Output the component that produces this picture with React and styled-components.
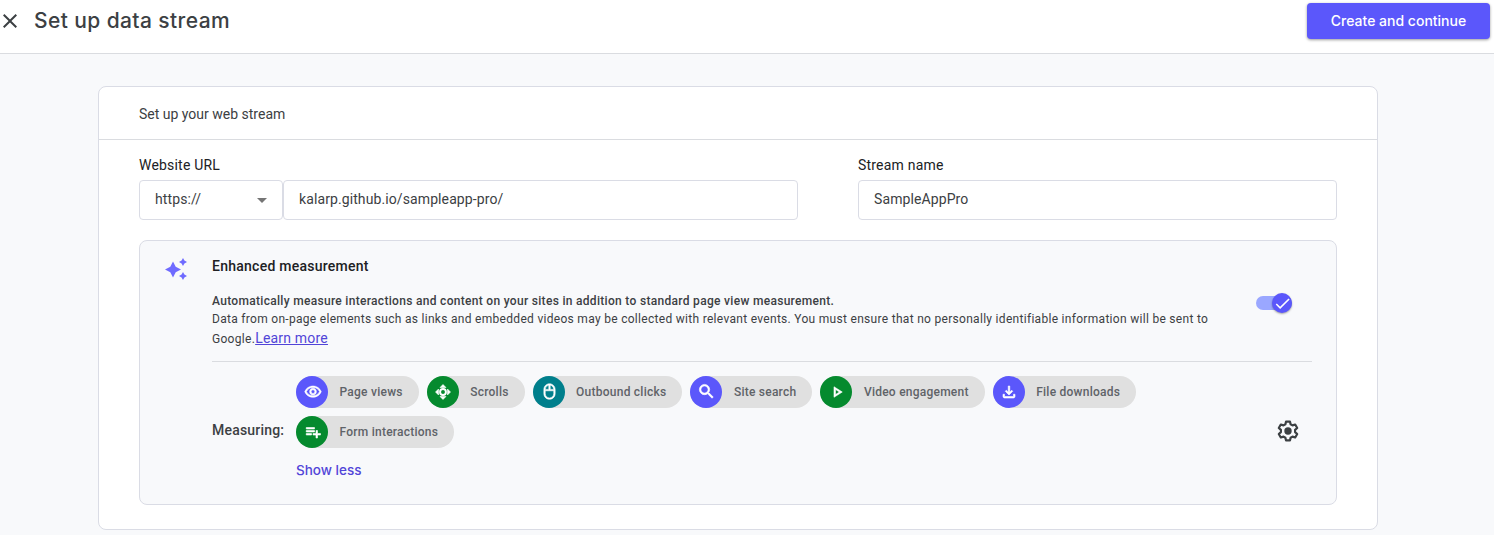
import React from "react";
import styled, { createGlobalStyle } from "styled-components";
import {
  MdClose, MdArrowDropDown, MdOutlineVisibility, MdOutlineMouse, MdSearch,
  MdOutlinePlayArrow, MdOutlineFileDownload, MdPlaylistAdd, MdCheck,
} from "react-icons/md";

const GlobalStyle = createGlobalStyle`
  * { box-sizing: border-box; }
  body {
    margin: 0;
    background: #f8f9fb;
    color: #3c4043;
    font-family: Roboto, "Liberation Sans", sans-serif;
    font-size: 14px;
    overflow: hidden;
  }
`;

const Header = styled.header`
  height: 54px;
  padding: 0 4px 12px 0;
  display: flex;
  align-items: center;
  justify-content: space-between;
  background: #fff;
  border-bottom: 1px solid #dadce0;
`;
const HeaderTitle = styled.div`
  display: flex;
  align-items: center;
  color: #3c4043;
  svg { margin-left: -2px; flex: none; }
`;
const Title = styled.h1`
  margin: 0 0 0 12px;
  font: 500 21px/28px Inter, sans-serif;
  letter-spacing: 0.4px;
  color: #3c4043;
`;
const PrimaryButton = styled.button`
  width: 183px;
  height: 36px;
  border: 0;
  border-radius: 4px;
  background: #5b57fb;
  color: #fff;
  font: 500 14px/20px Inter, sans-serif;
  letter-spacing: 0;
  box-shadow: 0 1px 3px rgba(0, 0, 0, 0.4);
`;

const Card = styled.main`
  width: 1280px;
  height: 444px;
  margin: 32px 0 0 98px;
  background: #fff;
  border: 1px solid #dadce5;
  border-radius: 8px;
`;
const CardHeader = styled.div`
  height: 53px;
  padding: 2px 40px 0;
  display: flex;
  align-items: center;
  border-bottom: 1px solid #dadce0;
  letter-spacing: 0;
`;
const CardBody = styled.div`
  padding: 15px 40px 0;
`;
const Fields = styled.div`
  display: grid;
  grid-template-columns: 659px 479px;
  gap: 60px;
`;
const Field = styled.div``;
const Label = styled.div`
  height: 25px;
  line-height: 20px;
  letter-spacing: 0.2px;
  color: #202124;
`;
const Controls = styled.div`
  display: flex;
`;
const Box = styled.div`
  height: 40px;
  flex: ${(p) => (p.$width ? `0 0 ${p.$width}px` : "1")};
  padding: 0 8px 2px 15px;
  display: flex;
  align-items: center;
  justify-content: space-between;
  border: 1px solid #dadce5;
  border-radius: 4px;
  letter-spacing: 0.1px;
  color: #3c4043;
  svg { color: #757575; margin-top: 2px; }
`;

const Panel = styled.section`
  height: 265px;
  margin-top: 20px;
  padding: 15px 24px 0;
  display: grid;
  grid-template-columns: 24px 1fr;
  column-gap: 24px;
  background: #f8f9fb;
  border: 1px solid #dadce5;
  border-radius: 8px;
`;
const SparkSlot = styled.div`
  padding-top: 1px;
`;
const PanelTitle = styled.h2`
  margin: 0;
  font: 500 14px/20px Roboto, sans-serif;
  letter-spacing: 0.25px;
  color: #202124;
`;
const Summary = styled.div`
  height: 70px;
  margin-top: 15px;
  display: flex;
  justify-content: space-between;
`;
const Description = styled.div`
  width: 1010px;
  padding-top: 1px;
  font-size: 12px;
  line-height: 18px;
  letter-spacing: 0.298px;
`;
const Strong = styled.div`
  font-weight: 500;
  letter-spacing: 0.305px;
`;
const Link = styled.a`
  font-size: 14px;
  line-height: 20px;
  letter-spacing: 0.2px;
  color: #5145d8;
  text-decoration: underline;
`;
const Toggle = styled.div`
  width: 36px;
  height: 14px;
  margin: 5px 20px 0 0;
  display: flex;
  align-items: center;
  justify-content: flex-end;
  border-radius: 7px;
  background: #9aa7ff;
`;
const Knob = styled.div`
  width: 20px;
  height: 20px;
  flex: none;
  display: grid;
  place-items: center;
  border-radius: 50%;
  background: #5b57fb;
  color: #fff;
  box-shadow: 0 1px 2px rgba(0, 0, 0, 0.35);
`;
const Measuring = styled.div`
  display: flex;
  align-items: center;
  width: 1100px;
  height: 138px;
  border-top: 1px solid #dadce0;
`;
const MeasuringLabel = styled.div`
  width: 84px;
  padding-bottom: 2px;
  font-weight: 500;
  letter-spacing: 0.2px;
`;
const ChipArea = styled.div`
  width: 900px;
  height: 110px;
`;
const Chips = styled.div`
  display: flex;
  flex-wrap: wrap;
  gap: 8px;
`;
const Chip = styled.div`
  height: 32px;
  padding-right: 16px;
  display: flex;
  align-items: center;
  border-radius: 16px;
  background: #e0e0e0;
  color: #5f6368;
  font-size: 12px;
  font-weight: 500;
  letter-spacing: 0.24px;
`;
const ChipIcon = styled.span`
  width: 32px;
  height: 32px;
  margin-right: 11.5px;
  padding-left: 1px;
  display: grid;
  place-items: center;
  border-radius: 50%;
  background: ${(p) => p.$color};
  color: #fff;
  path:not([fill="none"]) { stroke: currentColor; stroke-width: 0.8px; }
`;
const ShowLess = styled.div`
  margin-top: 12px;
  font: 500 13.5px/20px Inter, sans-serif;
  letter-spacing: 0;
  color: #5145d8;
`;
const Settings = styled.svg`
  margin: 0 13px 0 auto;
`;

const SparkIcon = () => (
  <svg width="24" height="24" viewBox="0 0 24 24" fill="#6f6bff">
    <path d="M9 4.500l2.700 5.300L17 12.500l-5.300 2.700L9 20.500l-2.700-5.300L1 12.500l5.300-2.700zM19 1l1.400 2.600L23 5l-2.600 1.400L19 9l-1.400-2.600L15 5l2.600-1.400zM19 15l1.400 2.600L23 19l-2.600 1.400L19 23l-1.400-2.600L15 19l2.600-1.400z" />
  </svg>
);

const ScrollIcon = () => (
  <svg width="18" height="18" viewBox="0 0 24 24" fill="currentColor">
    <path d="M12 2 8 6h8zM12 22l4-4H8zM2 12l4 4V8zM22 12l-4-4v8z" />
    <circle cx="12" cy="12" r="3.900" fill="none" stroke="currentColor" strokeWidth="2.600" />
  </svg>
);

const BLUE = "#5b57fb";
const GREEN = "#058a2e";
const TEAL = "#007f8c";

const chips = [
  { label: "Page views", color: BLUE, icon: <MdOutlineVisibility size={18} /> },
  { label: "Scrolls", color: GREEN, icon: <ScrollIcon /> },
  { label: "Outbound clicks", color: TEAL, icon: <MdOutlineMouse size={17} /> },
  { label: "Site search", color: BLUE, icon: <MdSearch size={19} /> },
  { label: "Video engagement", color: GREEN, icon: <MdOutlinePlayArrow size={18} /> },
  { label: "File downloads", color: BLUE, icon: <MdOutlineFileDownload size={18} /> },
  { label: "Form interactions", color: GREEN, icon: <MdPlaylistAdd size={18} /> },
];

export default function App() {
  return (
    <>
      <GlobalStyle />
      <Header>
        <HeaderTitle>
          <MdClose size={24} />
          <Title>Set up data stream</Title>
        </HeaderTitle>
        <PrimaryButton>Create and continue</PrimaryButton>
      </Header>
      <Card>
        <CardHeader>Set up your web stream</CardHeader>
        <CardBody>
          <Fields>
            <Field>
              <Label>Website URL</Label>
              <Controls>
                <Box $width={144}>https://<MdArrowDropDown size={24} /></Box>
                <Box>kalarp.github.io/sampleapp-pro/</Box>
              </Controls>
            </Field>
            <Field>
              <Label>Stream name</Label>
              <Controls><Box>SampleAppPro</Box></Controls>
            </Field>
          </Fields>
          <Panel>
            <SparkSlot><SparkIcon /></SparkSlot>
            <div>
              <PanelTitle>Enhanced measurement</PanelTitle>
              <Summary>
                <Description>
                  <Strong>Automatically measure interactions and content on your sites in addition to standard page view measurement.</Strong>
                  Data from on-page elements such as links and embedded videos may be collected with relevant events. You must ensure that no personally identifiable information will be sent to Google.<Link>Learn more</Link>
                </Description>
                <Toggle><Knob><MdCheck size={19} /></Knob></Toggle>
              </Summary>
              <Measuring>
                <MeasuringLabel>Measuring:</MeasuringLabel>
                <ChipArea>
                  <Chips>
                    {chips.map((c) => (
                      <Chip key={c.label}>
                        <ChipIcon $color={c.color}>{c.icon}</ChipIcon>
                        {c.label}
                      </Chip>
                    ))}
                  </Chips>
                  <ShowLess>Show less</ShowLess>
                </ChipArea>
                <Settings width="22" height="22" viewBox="0 0 22 22" fill="none" stroke="#3c4043" strokeWidth="2.200" strokeLinejoin="round">
                  <path d="M9 1.700h4l.6 2.600 1.900 1.100 2.700-.9 2 3.500-2.100 1.900v2.200l2.100 1.900-2 3.500-2.700-.9-1.900 1.100-.6 2.600H9l-.6-2.600-1.900-1.100-2.700.9-2-3.500 2.100-1.900V9.900L1.800 8l2-3.500 2.700.9 1.900-1.100z" />
                  <circle cx="11" cy="11" r="3.700" fill="#3c4043" stroke="none" />
                </Settings>
              </Measuring>
            </div>
          </Panel>
        </CardBody>
      </Card>
    </>
  );
}
